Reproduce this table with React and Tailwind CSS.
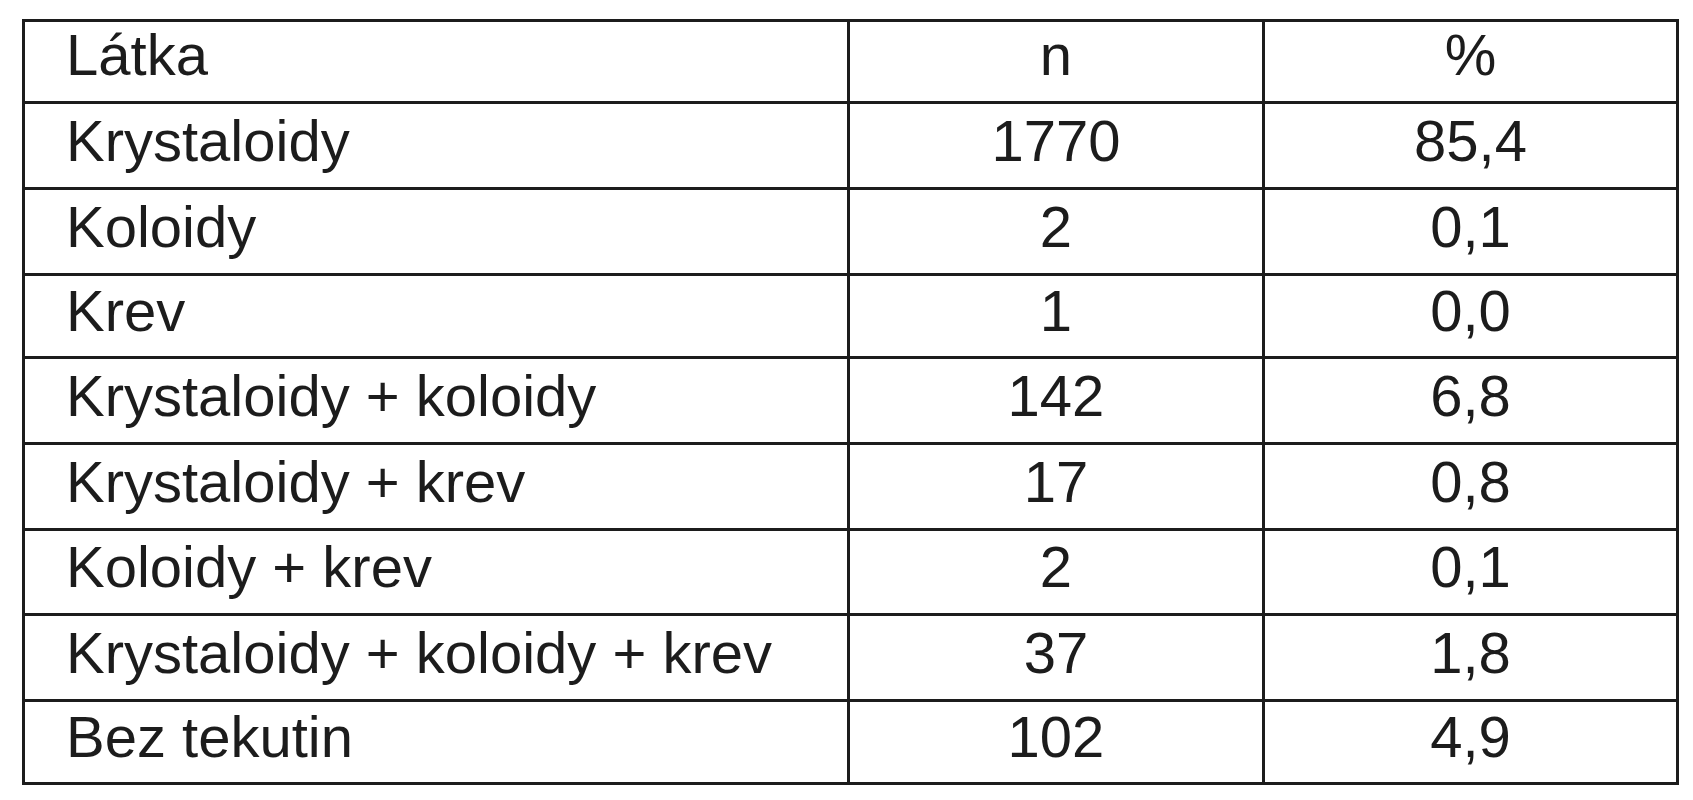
const rows = [
  { name: 'Krystaloidy', n: '1770', pct: '85,4', h: 'h-[86px]' },
  { name: 'Koloidy', n: '2', pct: '0,1', h: 'h-[86px]' },
  { name: 'Krev', n: '1', pct: '0,0', h: 'h-[83px]' },
  { name: 'Krystaloidy + koloidy', n: '142', pct: '6,8', h: 'h-[86px]' },
  { name: 'Krystaloidy + krev', n: '17', pct: '0,8', h: 'h-[86px]' },
  { name: 'Koloidy + krev', n: '2', pct: '0,1', h: 'h-[85px]' },
  { name: 'Krystaloidy + koloidy + krev', n: '37', pct: '1,8', h: 'h-[86px]' },
  { name: 'Bez tekutin', n: '102', pct: '4,9', h: 'h-[83px]' },
];

function Row({ name, n, pct, h, header }) {
  const pad = header ? 'pb-[15px]' : 'pb-[11px]';
  return (
    <div className={`flex ${h} ${header ? '' : 'border-t-[3px] border-[#1c1c1c]'}`}>
      <div className={`w-[822px] flex items-center pl-[41px] ${pad}`}>{name}</div>
      <div className={`w-[415px] flex items-center justify-center border-l-[3px] border-[#1c1c1c] ${pad}`}>{n}</div>
      <div className={`w-[414px] flex items-center justify-center border-l-[3px] border-[#1c1c1c] ${pad}`}>{pct}</div>
    </div>
  );
}

export default function App() {
  return (
    <div className="w-[1693px] h-[800px] bg-white pt-[19px] pl-[22px]">
      <div
        className="w-[1657px] border-[3px] border-[#1c1c1c] text-[58px] text-[#1c1c1c] leading-normal whitespace-nowrap"
        style={{ fontFamily: '"Liberation Sans", Arial, sans-serif' }}
      >
        <Row name="Látka" n="n" pct="%" h="h-[79px]" header />
        {rows.map((r) => (
          <Row key={r.name + r.n} {...r} />
        ))}
      </div>
    </div>
  );
}
